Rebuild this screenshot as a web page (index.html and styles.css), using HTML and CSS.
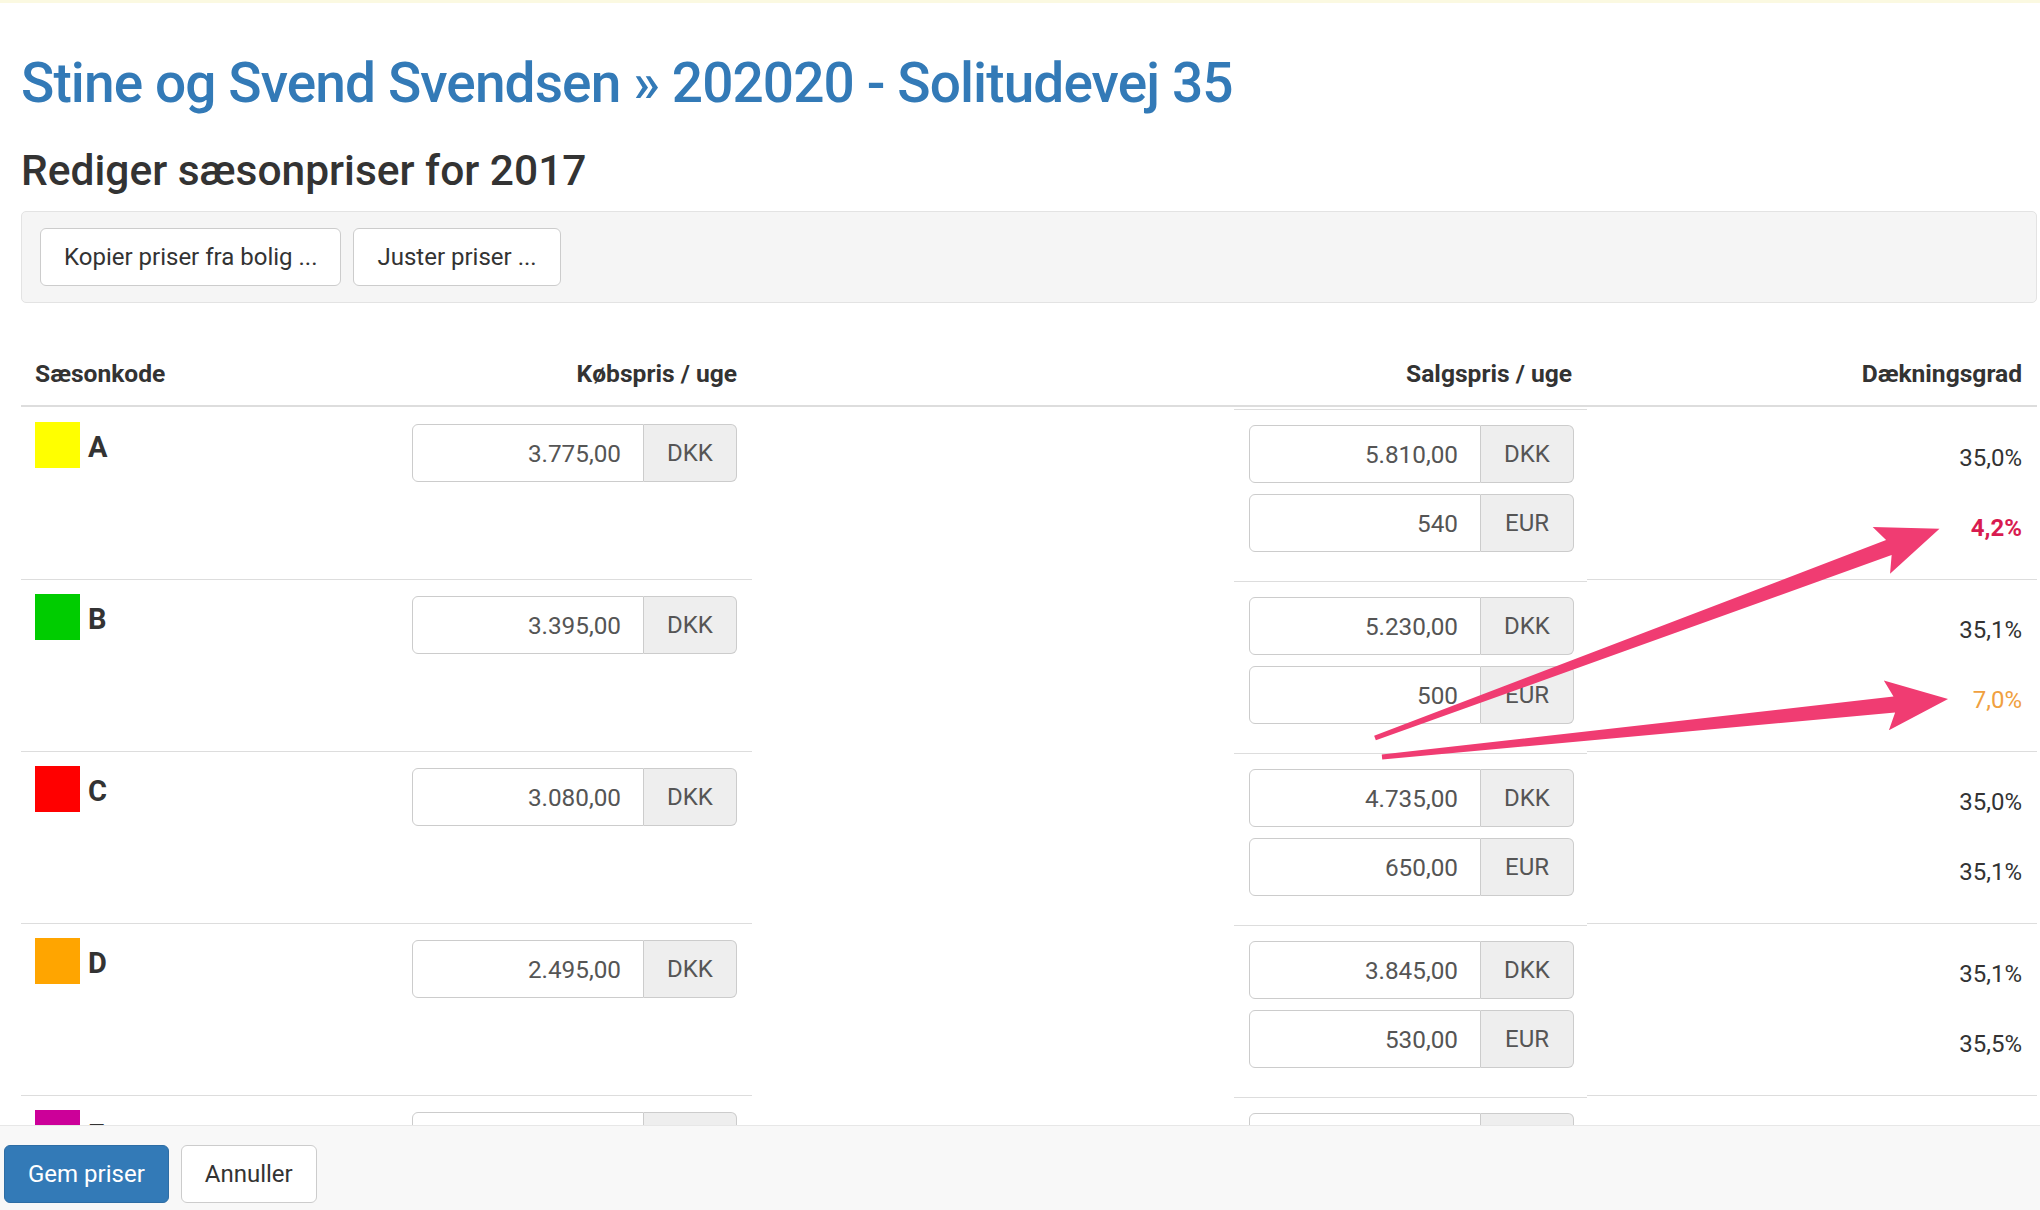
FILE: index.html
```html
<!DOCTYPE html>
<html lang="da">
<head>
    <meta charset="UTF-8">
    <meta name="viewport" content="width=device-width, initial-scale=1.0">
    <title>Rediger sæsonpriser</title>
    <link rel="stylesheet" href="styles.css">
</head>
<body>
    <div class="page">
        <h1 class="title"><a href="#">Stine og Svend Svendsen</a> &raquo; <a href="#">202020 - Solitudevej 35</a></h1>
        <h3 class="subtitle">Rediger sæsonpriser for 2017</h3>

        <div class="well">
            <button class="btn">Kopier priser fra bolig ...</button>
            <button class="btn">Juster priser ...</button>
        </div>

        <table class="prices">
            <colgroup>
                <col class="w-code">
                <col class="w-kob">
                <col class="w-gap">
                <col class="w-salg">
                <col class="w-daek">
            </colgroup>
            <thead>
                <tr>
                    <th class="left">Sæsonkode</th>
                    <th>Købspris / uge</th>
                    <th></th>
                    <th>Salgspris / uge</th>
                    <th>Dækningsgrad</th>
                </tr>
            </thead>
            <tbody>
                <tr class="first">
                    <td class="code"><span class="swatch yellow"></span><span class="letter">A</span></td>
                    <td class="kob">
                        <div class="input-group"><input type="text" value="3.775,00"><span class="addon">DKK</span></div>
                    </td>
                    <td class="gap"></td>
                    <td class="salg">
                        <div class="nested">
                            <div class="input-group"><input type="text" value="5.810,00"><span class="addon">DKK</span></div>
                            <div class="input-group"><input type="text" value="540"><span class="addon">EUR</span></div>
                        </div>
                    </td>
                    <td class="daek">
                        <div class="pct">35,0%</div>
                        <div class="pct danger">4,2%</div>
                    </td>
                </tr>
                <tr>
                    <td class="code"><span class="swatch green"></span><span class="letter">B</span></td>
                    <td class="kob">
                        <div class="input-group"><input type="text" value="3.395,00"><span class="addon">DKK</span></div>
                    </td>
                    <td class="gap"></td>
                    <td class="salg">
                        <div class="nested">
                            <div class="input-group"><input type="text" value="5.230,00"><span class="addon">DKK</span></div>
                            <div class="input-group"><input type="text" value="500"><span class="addon">EUR</span></div>
                        </div>
                    </td>
                    <td class="daek">
                        <div class="pct">35,1%</div>
                        <div class="pct warning">7,0%</div>
                    </td>
                </tr>
                <tr>
                    <td class="code"><span class="swatch red"></span><span class="letter">C</span></td>
                    <td class="kob">
                        <div class="input-group"><input type="text" value="3.080,00"><span class="addon">DKK</span></div>
                    </td>
                    <td class="gap"></td>
                    <td class="salg">
                        <div class="nested">
                            <div class="input-group"><input type="text" value="4.735,00"><span class="addon">DKK</span></div>
                            <div class="input-group"><input type="text" value="650,00"><span class="addon">EUR</span></div>
                        </div>
                    </td>
                    <td class="daek">
                        <div class="pct">35,0%</div>
                        <div class="pct">35,1%</div>
                    </td>
                </tr>
                <tr>
                    <td class="code"><span class="swatch orange"></span><span class="letter">D</span></td>
                    <td class="kob">
                        <div class="input-group"><input type="text" value="2.495,00"><span class="addon">DKK</span></div>
                    </td>
                    <td class="gap"></td>
                    <td class="salg">
                        <div class="nested">
                            <div class="input-group"><input type="text" value="3.845,00"><span class="addon">DKK</span></div>
                            <div class="input-group"><input type="text" value="530,00"><span class="addon">EUR</span></div>
                        </div>
                    </td>
                    <td class="daek">
                        <div class="pct">35,1%</div>
                        <div class="pct">35,5%</div>
                    </td>
                </tr>
                <tr>
                    <td class="code"><span class="swatch magenta"></span><span class="letter">E</span></td>
                    <td class="kob">
                        <div class="input-group"><input type="text" value=""><span class="addon">DKK</span></div>
                    </td>
                    <td class="gap"></td>
                    <td class="salg">
                        <div class="nested">
                            <div class="input-group"><input type="text" value=""><span class="addon">DKK</span></div>
                        </div>
                    </td>
                    <td class="daek"></td>
                </tr>
            </tbody>
        </table>
    </div>

    <!-- annotation arrows drawn on top of the screenshot -->
    <svg class="arrows" width="2040" height="1210" viewBox="0 0 2040 1210">
        <polygon points="0,-2.5 548,-8 540,-25 602,0 540,25 548,8 0,2.5" transform="translate(1375 738) rotate(-20.33)"/>
        <polygon points="0,-2.5 515,-8 507,-25 569,0 507,25 515,8 0,2.5" transform="translate(1382 757) rotate(-5.85)"/>
    </svg>

    <div class="footer">
        <button class="btn btn-primary">Gem priser</button>
        <button class="btn">Annuller</button>
    </div>
</body>
</html>
```

FILE: styles.css
```css
* {
    box-sizing: border-box;
}

body {
    margin: 0;
    border-top: 3px solid #fbf9e1;
    font-family: Roboto, "Liberation Sans", sans-serif;
    font-size: 24px;
    color: #333;
    background: #fff;
    position: relative;
    overflow: hidden;
    height: 1210px;
}

.page {
    padding: 48px 3px 0 21px;
}

.title {
    margin: 0;
    font-size: 55px;
    line-height: 64px;
    font-weight: 500;
    letter-spacing: -0.9px;
    color: #337ab7;
}

.title a {
    color: #337ab7;
    text-decoration: none;
}

.subtitle {
    margin: 31px 0 0;
    font-size: 42.5px;
    line-height: 50px;
    font-weight: 500;
    color: #333;
}

.well {
    margin-top: 15px;
    height: 92px;
    padding: 16px 18px;
    background: #f5f5f5;
    border: 1px solid #e3e3e3;
    border-radius: 5px;
    display: flex;
    gap: 12px;
}

.btn {
    height: 58px;
    padding: 0 23px;
    font-family: inherit;
    font-size: 24px;
    line-height: 56px;
    color: #333;
    background: #fff;
    border: 1px solid #ccc;
    border-radius: 6px;
}

.btn-primary {
    color: #fff;
    background: #337ab7;
    border-color: #2e6da4;
}

/* price table */
.prices {
    margin-top: 40px;
    width: 2016px;
    table-layout: fixed;
    border-collapse: separate;
    border-spacing: 0;
}

.w-code { width: 376px; }
.w-kob { width: 355px; }
.w-gap { width: 482px; }
.w-salg { width: 353px; }
.w-daek { width: 450px; }

.prices th {
    padding: 14px 15px 14px 14px;
    font-size: 24.6px;
    line-height: 34px;
    font-weight: bold;
    text-align: right;
    border-bottom: 2px solid #ddd;
}

.prices th.left {
    text-align: left;
}

.prices td {
    vertical-align: top;
    border-top: 1px solid #ddd;
    padding: 16px 15px 0 14px;
}

.prices tr.first td {
    border-top-color: transparent;
}

.prices td.gap,
.prices td.salg {
    border-top-color: transparent;
}

.prices td.code {
    padding-top: 14px;
}

.code {
    display: flex;
    gap: 8px;
    align-items: flex-start;
}

.swatch {
    display: inline-block;
    width: 45px;
    height: 46px;
}

.yellow { background: #ffff00; }
.green { background: #00cc00; }
.red { background: #ff0000; }
.orange { background: #ffa500; }
.magenta { background: #cc0099; }

.letter {
    margin-top: 11px;
    font-size: 29px;
    line-height: 29px;
    font-weight: bold;
}

.kob .input-group {
    margin-left: auto;
}

.input-group {
    display: flex;
    width: 325px;
    height: 58px;
}

.input-group input {
    width: 232px;
    height: 58px;
    padding: 0 22px;
    font-family: inherit;
    font-size: 24.3px;
    color: #555;
    text-align: right;
    border: 1px solid #ccc;
    border-radius: 6px 0 0 6px;
    background: #fff;
    outline: none;
}

.addon {
    width: 93px;
    height: 58px;
    line-height: 56px;
    text-align: center;
    color: #555;
    background: #eee;
    border: 1px solid #ccc;
    border-left: 0;
    border-radius: 0 6px 6px 0;
}

.prices td.salg {
    padding: 1px 0 0;
}

.nested {
    border-top: 1px solid #ddd;
    padding: 15px 14px 27px 15px;
    display: flex;
    flex-direction: column;
    gap: 11px;
}

.prices td.daek {
    padding-top: 21px;
    text-align: right;
}

.pct {
    height: 58px;
    line-height: 58px;
    margin-bottom: 12px;
}

.danger {
    color: #d81b50;
    font-weight: bold;
}

.warning {
    color: #f0a040;
}

.arrows {
    position: absolute;
    top: -3px;
    left: 0;
    pointer-events: none;
    z-index: 5;
}

.arrows polygon {
    fill: #f03c72;
}

.footer {
    position: fixed;
    left: 0;
    right: 0;
    bottom: 0;
    height: 85px;
    padding: 19px 4px 0;
    background: #f8f8f8;
    border-top: 1px solid #e7e7e7;
    display: flex;
    gap: 12px;
    z-index: 10;
}
```
